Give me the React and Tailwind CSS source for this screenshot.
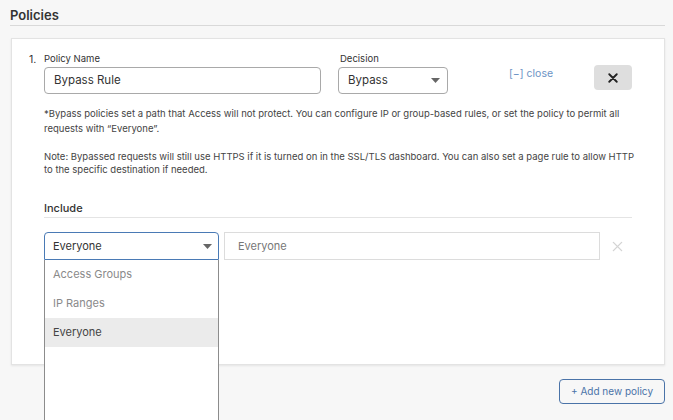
import React from 'react';

const Caret = () => (
   <svg width="9" height="5" viewBox="0 0 9 5" className="fill-[#666]">
      <path d="M0 0h9L4.5 5z" />
   </svg>
);

const XIcon = ({ className = '', size = 12, stroke = 2 }) => (
   <svg width={size} height={size} viewBox="0 0 12 12" className={className}>
      <path d="M1.5 1.5l9 9M10.5 1.5l-9 9" strokeWidth={stroke} strokeLinecap="round" className="stroke-current" fill="none" />
   </svg>
);

const options = ['Access Groups', 'IP Ranges', 'Everyone'];

export default function App() {
   return (
      <div className="w-[673px] h-[420px] overflow-hidden bg-[#f7f7f7] text-[#333] font-['Inter','Noto_Sans',sans-serif] px-[10px] pt-[7px]">
         <h2 className="text-[13px] font-semibold leading-[17px] pb-[1px] border-b border-[#d9d9d9] w-[655px]">Policies</h2>

         <div className="mt-[12px] ml-[1px] w-[654px] h-[327px] bg-white border border-[#e3e3e3] shadow-[0_1px_2px_rgba(0,0,0,0.08)] pt-[13px] pl-[17px]">
            <div className="flex">
               <span className="w-[15px] text-[10.5px] leading-[14px] pt-[1px]">1.</span>
               <div className="flex flex-col">
                  <div className="flex items-start">
                     <div className="flex flex-col w-[277px]">
                        <label className="text-[9.5px] leading-[13px] mb-[2px]">Policy Name</label>
                        <div className="h-[27px] border border-[#a9a9a9] rounded-[4px] flex items-center px-[9px] text-[11.5px]">Bypass Rule</div>
                     </div>
                     <div className="flex flex-col w-[110px] ml-[17px]">
                        <label className="text-[9.5px] leading-[13px] mb-[2px] pl-[2px]">Decision</label>
                        <div className="h-[27px] border border-[#a9a9a9] rounded-[4px] flex items-center justify-between pl-[9px] pr-[7px] text-[11.5px]">
                           Bypass
                           <Caret />
                        </div>
                     </div>
                     <a className="ml-[61px] mt-[15px] text-[10.5px] leading-[14px] text-[#6b93c5]">[−] close</a>
                     <button className="ml-[41px] mt-[13px] w-[38px] h-[25px] bg-[#dedede] rounded-[4px] flex items-center justify-center text-[#222]">
                        <XIcon size={10} stroke={2.2} />
                     </button>
                  </div>

                  <p className="mt-[12px] w-[600px] text-[9.5px] leading-[15px] text-[#444]">
                     *Bypass policies set a path that Access will not protect. You can configure IP or group-based rules, or set the policy to permit all requests with “Everyone”.
                  </p>
                  <p className="mt-[14px] w-[600px] text-[9.5px] leading-[13px] text-[#444]">
                     Note: Bypassed requests will still use HTTPS if it is turned on in the SSL/TLS dashboard. You can also set a page rule to allow HTTP to the specific destination if needed.
                  </p>

                  <div className="mt-[25px] w-[588px] border-b border-[#e4e4e4] pb-[1px] text-[11px] leading-[15px] font-medium">Include</div>

                  <div className="mt-[14px] flex items-center">
                     <div className="relative w-[175px]">
                        <div className="h-[28px] border border-[#4a7ab5] rounded-t-[4px] flex items-center justify-between pl-[8px] pr-[6px] text-[11px]">
                           Everyone
                           <Caret />
                        </div>
                        <ul className="absolute left-0 top-full w-full h-[200px] bg-white border-x border-[#8c8c8c]">
                           {options.map(o => (
                              <li
                                 key={o}
                                 className={
                                    o === 'Everyone'
                                       ? 'h-[29px] flex items-center pl-[8px] text-[11px] bg-[#ebebeb] text-[#444]'
                                       : 'h-[29px] flex items-center pl-[8px] text-[11px] text-[#8a8a8a]'
                                 }>
                                 {o}
                              </li>
                           ))}
                        </ul>
                     </div>
                     <div className="ml-[5px] w-[376px] h-[28px] border border-[#dcdcdc] flex items-center pl-[13px] text-[11px] text-[#777]">Everyone</div>
                     <span className="ml-[12px] text-[#d4d4d4]">
                        <XIcon size={11} stroke={1.5} />
                     </span>
                  </div>
               </div>
            </div>
         </div>

         <div className="flex justify-end w-[655px] mt-[14px]">
            <button className="w-[106px] h-[25px] border border-[#4a73a8] rounded-[4px] text-[10px] text-[#4a73a8] bg-white/0">+ Add new policy</button>
         </div>
      </div>
   );
}
